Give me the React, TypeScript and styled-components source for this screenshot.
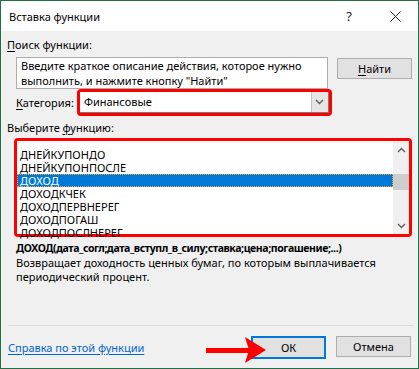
import React from "react";
import styled, { createGlobalStyle } from "styled-components";

const GlobalStyle = createGlobalStyle`
  html, body {
    margin: 0;
    padding: 0;
    background: #ffffff;
  }
  * {
    box-sizing: border-box;
  }
`;

const Window = styled.div`
  position: relative;
  width: 419px;
  height: 369px;
  border: 1px solid #1e7145;
  background: #f0f0f0;
  font-family: "Noto Sans", "Segoe UI", sans-serif;
  font-size: 11px;
  color: #000;
  display: flex;
  flex-direction: column;
  overflow: hidden;
`;

const TitleBar = styled.div`
  height: 30px;
  background: #fff;
  display: flex;
  align-items: center;
  padding: 0 0 0 8px;
`;

const Title = styled.div`
  flex: 1;
  font-size: 11px;
`;

const TitleButton = styled.div`
  width: 46px;
  height: 30px;
  display: flex;
  align-items: center;
  justify-content: center;
  font-size: 13px;
  color: #222;
`;

const Body = styled.div`
  flex: 1;
  display: flex;
  flex-direction: column;
  padding: 6px 6px 0 6px;
`;

const Label = styled.div<{ $top?: number }>`
  margin-top: ${(p) => p.$top ?? 0}px;
  line-height: 16px;
  white-space: nowrap;
`;

const Key = styled.span`
  text-decoration: underline;
  text-underline-offset: 2px;
`;

const SearchRow = styled.div`
  display: flex;
  align-items: flex-start;
  margin-top: 4px;
  padding-left: 9px;
`;

const SearchBox = styled.div`
  width: 312px;
  height: 32px;
  background: #fff;
  border: 1px solid #adadad;
  padding: 0 4px;
  line-height: 15px;
  white-space: nowrap;
`;

const Button = styled.div<{ $focused?: boolean }>`
  width: 75px;
  height: ${(p) => (p.$focused ? 23 : 21)}px;
  background: #e1e1e1;
  border: ${(p) => (p.$focused ? "2px solid #0078d7" : "1px solid #adadad")};
  display: flex;
  align-items: center;
  justify-content: center;
`;

const SearchButton = styled(Button)`
  margin-left: 9px;
  margin-top: 1px;
`;

const CategoryRow = styled.div`
  display: flex;
  align-items: center;
  gap: 3px;
  padding-left: 9px;
`;

const Highlight = styled.div<{ $w: number; $h: number }>`
  width: ${(p) => p.$w}px;
  height: ${(p) => p.$h}px;
  border: 3px solid #ff0000;
  border-radius: 4px;
  display: flex;
`;

const Select = styled.div`
  flex: 1;
  display: flex;
  background: #fff;
  border: 1px solid #7a7a7a;
  border-left: none;
  border-top: none;
`;

const SelectValue = styled.div`
  flex: 1;
  padding-left: 4px;
  line-height: 20px;
`;

const SelectArrow = styled.div`
  width: 17px;
  background: #e5e5e5;
  border-left: 1px solid #c4c4c4;
  display: flex;
  align-items: center;
  justify-content: center;
`;

const ListWrap = styled.div`
  margin-top: 2px;
  padding-left: 7px;
`;

const List = styled.div`
  flex: 1;
  display: flex;
  background: #fff;
`;

const Items = styled.div`
  flex: 1;
  padding-top: 7px;
`;

const Item = styled.div<{ $selected?: boolean }>`
  height: 13px;
  line-height: 13px;
  padding-left: 3px;
  color: ${(p) => (p.$selected ? "#fff" : "#000")};
  background: ${(p) => (p.$selected ? "#0078d7" : "transparent")};
  outline: ${(p) => (p.$selected ? "1px dotted #f5a623" : "none")};
  outline-offset: -1px;
  white-space: nowrap;
`;

const ScrollBar = styled.div`
  width: 16px;
  background: #f0f0f0;
  display: flex;
  flex-direction: column;
  align-items: stretch;
`;

const ScrollArrow = styled.div`
  height: 17px;
  display: flex;
  align-items: center;
  justify-content: center;
`;

const ScrollTrack = styled.div`
  flex: 1;
  padding-top: 16px;
`;

const Thumb = styled.div`
  height: 16px;
  background: #cdcdcd;
`;

const Syntax = styled.div`
  font-weight: bold;
  font-size: 10.5px;
  letter-spacing: -0.4px;
  padding-left: 9px;
  margin-top: 3px;
  line-height: 16px;
  white-space: nowrap;
`;

const Description = styled.div`
  padding-left: 9px;
  line-height: 14px;
`;

const Spacer = styled.div`
  flex: 1;
`;

const Separator = styled.div`
  height: 1px;
  background: #dadada;
  margin: 0 0 0 1px;
  width: 405px;
`;

const Footer = styled.div`
  height: 42px;
  display: flex;
  align-items: center;
  padding-left: 1px;
`;

const HelpLink = styled.a`
  flex: 1;
  color: #0066cc;
  text-decoration: underline;
  text-underline-offset: 2px;
`;

const FooterButtons = styled.div`
  display: flex;
  gap: 10px;
  padding-right: 1px;
`;

const Arrow = styled.svg`
  position: absolute;
  left: 203px;
  top: 333px;
`;

const Chevron: React.FC<{ up?: boolean }> = ({ up }) => (
  <svg width={9} height={6} viewBox="0 0 9 6">
    <path
      d={up ? "M1 5 L4.5 1.5 L8 5" : "M1 1 L4.5 4.5 L8 1"}
      fill="none"
      stroke="#606060"
      strokeWidth="1.4"
    />
  </svg>
);

const functions = [
  "ДНЕЙКУПОНДО",
  "ДНЕЙКУПОНПОСЛЕ",
  "ДОХОД",
  "ДОХОДКЧЕК",
  "ДОХОДПЕРВНЕРЕГ",
  "ДОХОДПОГАШ",
  "ДОХОДПОСЛНЕРЕГ",
];

export default function App() {
  return (
    <>
      <GlobalStyle />
      <Window>
        <TitleBar>
          <Title>Вставка функции</Title>
          <TitleButton>?</TitleButton>
          <TitleButton>
            <svg width="11" height="11" viewBox="0 0 11 11">
              <path d="M0.5 0.5 L10.5 10.5 M10.5 0.5 L0.5 10.5" stroke="#222" strokeWidth="1" />
            </svg>
          </TitleButton>
        </TitleBar>
        <Body>
          <Label>
            <Key>П</Key>оиск функции:
          </Label>
          <SearchRow>
            <SearchBox>
              Введите краткое описание действия, которое нужно
              <br />
              выполнить, и нажмите кнопку "Найти"
            </SearchBox>
            <SearchButton>
              <span>
                <Key>Н</Key>айти
              </span>
            </SearchButton>
          </SearchRow>
          <CategoryRow>
            <Label>
              <Key>К</Key>атегория:
            </Label>
            <Highlight $w={255} $h={27}>
              <Select>
                <SelectValue>Финансовые</SelectValue>
                <SelectArrow>
                  <Chevron />
                </SelectArrow>
              </Select>
            </Highlight>
          </CategoryRow>
          <Label $top={4}>
            Выберите <Key>ф</Key>ункцию:
          </Label>
          <ListWrap>
            <Highlight $w={398} $h={99}>
              <List>
                <Items>
                  {functions.map((f) => (
                    <Item key={f} $selected={f === "ДОХОД"}>
                      {f}
                    </Item>
                  ))}
                </Items>
                <ScrollBar>
                  <ScrollArrow>
                    <Chevron up />
                  </ScrollArrow>
                  <ScrollTrack>
                    <Thumb />
                  </ScrollTrack>
                  <ScrollArrow>
                    <Chevron />
                  </ScrollArrow>
                </ScrollBar>
              </List>
            </Highlight>
          </ListWrap>
          <Syntax>ДОХОД(дата_согл;дата_вступл_в_силу;ставка;цена;погашение;...)</Syntax>
          <Description>
            Возвращает доходность ценных бумаг, по которым выплачивается
            <br />
            периодический процент.
          </Description>
          <Spacer />
          <Separator />
          <Footer>
            <HelpLink>Справка по этой функции</HelpLink>
            <FooterButtons>
              <Button $focused>ОК</Button>
              <Button>Отмена</Button>
            </FooterButtons>
          </Footer>
        </Body>
        <Arrow width="64" height="32" viewBox="0 0 64 32">
          <rect x="2" y="14" width="44" height="5" fill="#ff0000" />
          <polygon points="41,3 62,16 41,29 45,16" fill="#ff0000" />
        </Arrow>
      </Window>
    </>
  );
}
